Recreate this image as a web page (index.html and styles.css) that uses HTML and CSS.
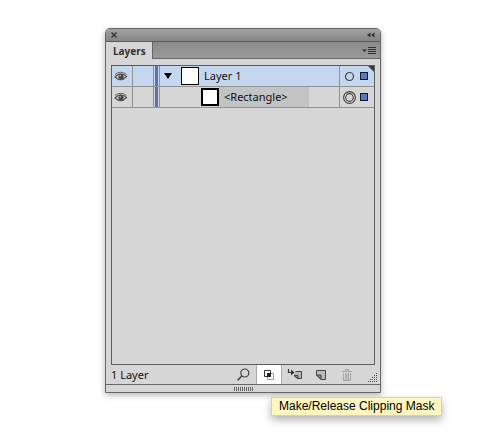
FILE: index.html
```html
<!DOCTYPE html>
<html lang="en">
<head>
  <meta charset="UTF-8" />
  <meta name="viewport" content="width=device-width, initial-scale=1.0"/>
  <title>Layers</title>
  <link rel="stylesheet" href="styles.css">
</head>
<body>

<svg width="0" height="0" class="defs">
  <symbol id="eye" viewBox="0 0 14 11">
    <path d="M1 6Q6.500 0 12.500 5.500Q7 11.500 1 6Z" fill="#d9dce2" stroke="#555" stroke-width="1.200"/>
    <path d="M1 3.500Q6.500-1 12.500 3.500" fill="none" stroke="#666"/>
    <circle cx="7" cy="5.500" r="2.600" fill="#444"/>
    <circle cx="6.200" cy="4.800" r=".8" fill="#ccc"/>
  </symbol>
</svg>

<section class="panel">
  <header class="titlebar">
    <button class="icon-btn" aria-label="Close">
      <svg width="6" height="6"><path d="M.5.5l5 5M5.500.5l-5 5" stroke="#333" stroke-width="1.400"/></svg>
    </button>
    <button class="icon-btn" aria-label="Collapse">
      <svg width="8" height="6"><path d="M3.500.5v5L0 3zM7.500.5v5L4 3z" fill="#333"/></svg>
    </button>
  </header>

  <div class="tabs">
    <button class="tab">Layers</button>
    <button class="icon-btn" aria-label="Panel menu">
      <svg width="14" height="8"><path d="M0 2.500h5L2.500 5z" fill="#333"/><path d="M6 .5h8M6 2.500h8M6 4.500h8M6 6.500h8" stroke="#333"/></svg>
    </button>
  </div>

  <div class="content">
    <div class="list">
      <div class="row selected">
        <button class="cell eye" aria-label="Toggle visibility"><svg width="14" height="11"><use href="#eye"/></svg></button>
        <button class="cell lock" aria-label="Toggle lock"></button>
        <span class="cell color"></span>
        <div class="cell item">
          <button class="icon-btn" aria-label="Expand"><svg width="8" height="6"><path d="M0 0h8L4 6z"/></svg></button>
          <span class="thumb"></span>
          <span class="name">Layer 1</span>
        </div>
        <div class="cell target">
          <button class="icon-btn" aria-label="Target"><svg width="13" height="13"><circle cx="6.500" cy="6.500" r="4" fill="none" stroke="#444" stroke-width="1.200"/></svg></button>
          <span class="square"></span>
        </div>
      </div>
      <div class="row">
        <button class="cell eye" aria-label="Toggle visibility"><svg width="14" height="11"><use href="#eye"/></svg></button>
        <button class="cell lock" aria-label="Toggle lock"></button>
        <span class="cell color"></span>
        <div class="cell item child">
          <span class="thumb"></span>
          <span class="name">&lt;Rectangle&gt;</span>
        </div>
        <div class="cell target">
          <button class="icon-btn" aria-label="Target"><svg width="13" height="13"><g fill="none" stroke="#444" stroke-width="1.200"><circle cx="6.500" cy="6.500" r="5.900"/><circle cx="6.500" cy="6.500" r="3.800"/></g></svg></button>
          <span class="square"></span>
        </div>
      </div>
      <svg class="corner" width="6" height="6"><path d="M0 0h6v6z" fill="#333e3e"/></svg>
    </div>
  </div>

  <footer class="toolbar">
    <span class="count">1 Layer</span>
    <button class="tool" aria-label="Locate object">
      <svg width="14" height="14"><circle cx="8.800" cy="5" r="4" fill="none" stroke="#444" stroke-width="1.200"/><path d="M6 7.800L1.500 12.500" stroke="#444" stroke-width="1.600"/></svg>
    </button>
    <button class="tool active" aria-describedby="tip" aria-label="Make/Release Clipping Mask">
      <svg width="12" height="12"><path d="M4.500 4.500h6v6h-6z" fill="#fff" stroke="#999"/><path d="M1.500 1.500h6v6h-6z" fill="none" stroke="#333"/><path d="M4 4h4v4H4z" fill="#222"/></svg>
      <span class="tooltip" id="tip" role="tooltip">Make/Release Clipping Mask</span>
    </button>
    <button class="tool" aria-label="Create new sublayer">
      <svg width="16" height="12"><path d="M1.500 0v3.500H6" fill="none" stroke="#333" stroke-width="1.200"/><path d="M4 .5l3.500 3L4 6.500z" fill="#333"/><path d="M8.500 2.500h6v7h-4L7.500 7V5.500" fill="#bbb" stroke="#444"/><path d="M7 6.500h4V10z" fill="#888" stroke="#444"/></svg>
    </button>
    <button class="tool" aria-label="Create new layer">
      <svg width="12" height="12"><path d="M1.500 1.500h9v9H6L1.500 6z" fill="#bbb" stroke="#444"/><path d="M1.500 6H6v4.500z" fill="#888" stroke="#444"/></svg>
    </button>
    <button class="tool" aria-label="Delete selection" disabled>
      <svg width="12" height="12"><path d="M1 2.500h10M4.500 2V.5h3V2M2.500 4v7.500h7V4M4.500 4v7M6 4v7M7.500 4v7" fill="none" stroke="#a5a5a5"/></svg>
    </button>
    <svg class="resize" width="10" height="10"><g stroke="#555" stroke-dasharray="1 1"><path d="M8 .5h1M6 2.500h4M4 4.500h6M2 6.500h8M0 8.500h10"/></g></svg>
  </footer>
  <div class="grip"><span></span></div>
</section>

</body>
</html>
```
FILE: styles.css
```css
body {
  box-sizing: border-box;
  min-height: 100vh;
  margin: 0;
  padding: 28px 119px 48px 105px;
  font-family: 'Noto Sans', sans-serif;
  font-size: 10px;
  line-height: 14px;
  background: #fff;
  color: #111;
}
button {
  margin: 0;
  padding: 0;
  border: none;
  background: none;
  font: inherit;
  color: inherit;
}
svg {
  display: block;
}
.defs {
  position: absolute;
}
.panel {
  border: 1px solid #666;
  border-radius: 5px 5px 0 0;
  background: #d6d6d6;
  box-shadow: 0 2px 6px rgba(0, 0, 0, 0.3);
}
.titlebar {
  display: flex;
  align-items: center;
  justify-content: space-between;
  height: 12px;
  padding: 0 5px;
  border-bottom: 1px solid #5c5c5c;
  border-radius: 4px 4px 0 0;
  background: linear-gradient(#a2a2a2, #868686);
}
.tabs {
  display: flex;
  align-items: center;
  justify-content: space-between;
  height: 17px;
  padding-right: 4px;
  background: linear-gradient(#8b8b8b, #9a9a9a);
  box-shadow: inset 0 -1px #666;
}
.tab {
  height: 17px;
  padding: 0 6px 0 7px;
  border-right: 1px solid #666;
  background: #d6d6d6;
  font-weight: bold;
  color: #333;
}
.content {
  padding: 6px 5px 0;
}
.list {
  position: relative;
  min-height: 298px;
  border: 1px solid #5c5c5c;
}
.row {
  display: flex;
  height: 20px;
  border-bottom: 1px solid #929292;
}
.selected {
  background: #c5d6ef;
}
.cell {
  display: flex;
  align-items: center;
  border-right: 1px solid #929292;
}
.eye {
  width: 21px;
  justify-content: center;
  padding-right: 2px;
}
.lock {
  width: 21px;
}
.color {
  width: 5px;
  justify-content: center;
}
.color::before {
  content: "";
  width: 3px;
  height: 100%;
  background: #5d70b0;
}
.item {
  flex: 1;
  padding-left: 4px;
}
.child {
  padding-left: 41px;
}
.child .name {
  flex: 1;
  margin-right: 30px;
  background: #c3c3c3;
}
.name {
  padding-left: 5px;
  font-size: 11px;
  line-height: 20px;
}
.thumb {
  box-sizing: border-box;
  width: 18px;
  height: 18px;
  border: 1px solid #000;
  background: #fff;
}
.item .icon-btn + .thumb {
  margin-left: 9px;
}
.child .thumb {
  border-width: 2px;
}
.target {
  gap: 4px;
  padding: 0 6px 0 3px;
  border-right: none;
}
.square {
  box-sizing: border-box;
  width: 8px;
  height: 8px;
  border: 1px solid #111a35;
  background: #6076b8;
}
.corner {
  position: absolute;
  top: 0;
  right: 0;
}
.toolbar {
  display: flex;
  height: 19px;
  padding-left: 5px;
  border-bottom: 1px solid #666;
}
.count {
  flex: 1;
  font-size: 11px;
  line-height: 20px;
}
.tool {
  position: relative;
  display: flex;
  align-items: center;
  justify-content: center;
  width: 26px;
}
.active {
  box-sizing: border-box;
  border: solid #aaa;
  border-width: 0 1px;
  background: #fff;
}
.tooltip {
  position: absolute;
  top: 32px;
  left: 14px;
  padding: 0 7px;
  border: 1px solid #d8d3a4;
  background: #fdf6c1;
  box-shadow: 0 4px 8px rgba(0, 0, 0, 0.3);
  font-family: 'Liberation Sans', Arial, sans-serif;
  font-size: 12px;
  line-height: 17px;
  white-space: nowrap;
  color: #000;
}
.resize {
  align-self: flex-end;
  margin: 0 2px 1px 8px;
}
.grip {
  display: flex;
  align-items: center;
  justify-content: center;
  height: 7px;
}
.grip span {
  width: 19px;
  height: 4px;
  background: repeating-linear-gradient(to right, #666 0 1px, #d6d6d6 1px 2px);
}
```
